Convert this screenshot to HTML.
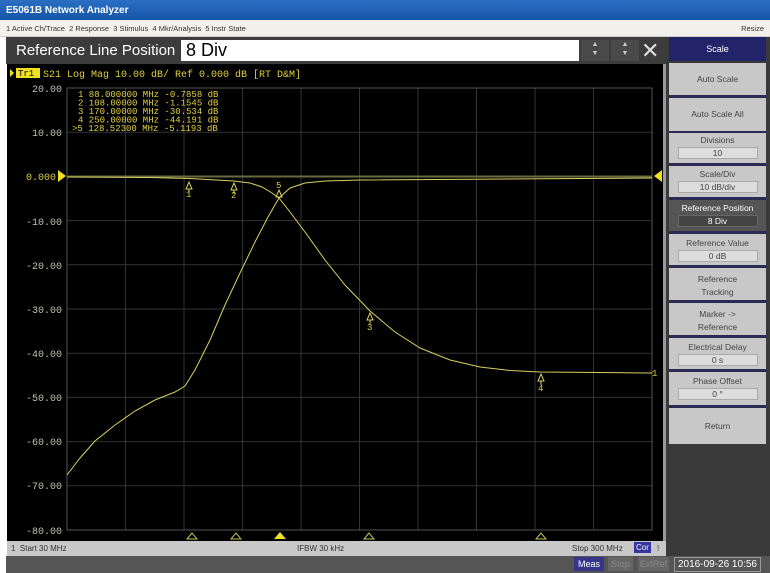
<!DOCTYPE html>
<html><head><meta charset="utf-8"><style>
*{margin:0;padding:0;box-sizing:border-box}
body{width:770px;height:573px;overflow:hidden;background:#fff;font-family:"Liberation Sans",sans-serif;position:relative}
.abs{position:absolute}
#title{left:0;top:0;width:770px;height:20px;background:linear-gradient(#2a6fc4,#1555a8);color:#fff;font-size:10px;font-weight:bold;padding:5px 0 0 6px}
#menu{left:0;top:20px;width:770px;height:17px;background:#f2f0ea;font-size:7.5px;color:#333;padding:4px 0 0 6px;border-bottom:1px solid #ccc}
#menu span.r{position:absolute;right:6px;top:4px}
#entry{left:6px;top:37px;width:660px;height:27px;background:#3c3c3c}
#entry .lbl{position:absolute;left:10px;top:5px;color:#fff;font-size:15px}
#entry .inp{position:absolute;left:175px;top:3px;width:398px;height:21px;background:#fff;font-size:18px;padding-left:5px;line-height:21px;color:#000}
.ab{position:absolute;top:3px;width:28px;height:21px;background:#4a4a4a;color:#ccc;font-size:7px;text-align:center;line-height:9px}
#panel{left:666px;top:37px;width:104px;height:519px;background:#3a3a3a}
.pb{position:absolute;left:3px;width:97px;background:#c8c8c8;border-bottom:3px solid #2a2a55;color:#444;font-size:8.5px;text-align:center}
.pb .v{margin:2px auto 0;width:80px;height:12px;background:#ddd;border:1px solid #aaa;line-height:10px}
#plot{left:7px;top:64px;width:656px;height:477px;background:#000}
#status{left:7px;top:541px;width:659px;height:15px;background:#c8c8c8;font-size:8px;color:#333}
#bottom{left:6px;top:556px;width:764px;height:17px;background:#555}
</style></head><body>
<div id="title" class="abs">E5061B Network Analyzer</div>
<div id="menu" class="abs">1 Active Ch/Trace &nbsp;2 Response &nbsp;3 Stimulus &nbsp;4 Mkr/Analysis &nbsp;5 Instr State<span class="r">Resize</span></div>
<div class="abs" style="left:0;top:37px;width:6px;height:536px;background:#fff"></div>
<div id="entry" class="abs"><div class="lbl">Reference Line Position</div><div class="inp">8 Div</div>
<div class="ab" style="left:575px">▲<br>▼</div><div class="ab" style="left:605px">▲<br>▼</div>
<div style="position:absolute;left:635px;top:0;color:#ddd;font-size:22px;line-height:27px">✕</div></div>
<div id="panel" class="abs">
<div style="position:absolute;left:3px;top:0;width:97px;height:24px;background:#23236a;color:#fff;font-size:9px;text-align:center;line-height:24px">Scale</div>
<div class="pb" style="top:26px;height:35px;line-height:32px">Auto Scale</div>
<div class="pb" style="top:61px;height:36px;line-height:33px">Auto Scale All</div>
<div class="pb" style="top:96px;height:33px;padding-top:2px">Divisions<div class="v">10</div></div>
<div class="pb" style="top:129px;height:34px;padding-top:3px">Scale/Div<div class="v">10 dB/div</div></div>
<div class="pb" style="top:163px;height:34px;padding-top:3px;background:#555;color:#fff">Reference Position<div class="v" style="background:#444;border-color:#666;color:#fff">8 Div</div></div>
<div class="pb" style="top:197px;height:34px;padding-top:4px">Reference Value<div class="v">0 dB</div></div>
<div class="pb" style="top:231px;height:35px;padding-top:5px;line-height:13px">Reference<br>Tracking</div>
<div class="pb" style="top:266px;height:35px;padding-top:5px;line-height:13px">Marker -&gt;<br>Reference</div>
<div class="pb" style="top:301px;height:34px;padding-top:4px">Electrical Delay<div class="v">0 s</div></div>
<div class="pb" style="top:335px;height:36px;padding-top:4px">Phase Offset<div class="v">0 °</div></div>
<div class="pb" style="top:371px;height:36px;line-height:36px;border-bottom:none">Return</div>
</div>
<div id="plot" class="abs">
<svg width="656" height="477" viewBox="7 64 656 477" style="display:block" font-family="Liberation Mono,monospace">
<g stroke="#333" stroke-width="1">
<path d="M125.5 88V530M184 88V530M242.5 88V530M301 88V530M359.5 88V530M418 88V530M476.5 88V530M535 88V530M593.5 88V530"/>
<path d="M67 132.2H652M67 220.6H652M67 264.8H652M67 309H652M67 353.2H652M67 397.4H652M67 441.6H652M67 485.8H652"/>
</g>
<rect x="67" y="88" width="585" height="442" fill="none" stroke="#555"/>
<rect x="67" y="175.5" width="585" height="2" fill="#6a6a40"/>
<g fill="#c0c0b0" font-size="10"><text x="62" y="92" text-anchor="end">20.00</text><text x="62" y="136" text-anchor="end">10.00</text><text x="56" y="180" text-anchor="end" fill="#e0d040">0.000</text>
<text x="62" y="225" text-anchor="end">-10.00</text><text x="62" y="269" text-anchor="end">-20.00</text><text x="62" y="313" text-anchor="end">-30.00</text><text x="62" y="357" text-anchor="end">-40.00</text><text x="62" y="401" text-anchor="end">-50.00</text><text x="62" y="445" text-anchor="end">-60.00</text><text x="62" y="489" text-anchor="end">-70.00</text><text x="62" y="534" text-anchor="end">-80.00</text></g>
<path d="M58 170L66 176L58 182Z" fill="#f0e020"/><path d="M662 170L654 176L662 182Z" fill="#f0e020"/>
<rect x="16" y="68" width="24" height="10" fill="#f0e020"/><path d="M10 69L14 73L10 77Z" fill="#f0e020"/>
<text x="18" y="76" font-size="9" fill="#000">Tr1</text>
<text x="43" y="77" font-size="10" fill="#e0d040" xml:space="preserve">S21 Log Mag 10.00 dB/ Ref 0.000 dB [RT D&amp;M]</text>
<g font-size="9" fill="#e0d040" xml:space="preserve"><text x="78" y="97"> 1   88.000000 MHz  -0.7858 dB</text><text x="78" y="105.5"> 2  108.00000 MHz  -1.1545 dB</text><text x="78" y="114"> 3  170.00000 MHz -30.534 dB</text><text x="78" y="122.5"> 4  250.00000 MHz -44.191 dB</text><text x="72" y="131">&gt;5  128.52300 MHz -5.1193 dB</text></g>
<g fill="none" stroke="#d8d060" stroke-width="1">
<path d="M67 177L150 177.5L190 178.5L234 181L250 183L262 187L272 193L279 198L290 212L305 232L325 260L345 285L370 311L395 332L420 348L450 360L480 367L510 370.5L540 372L600 372.5L652 373"/>
<path d="M67 475L80 458L95 441L115 425L135 411L155 400L175 392L185 386L195 370L210 340L225 305L240 273L255 242L268 217L279 198L290 188L305 183L325 181L360 180L652 178"/>
</g>
<g stroke="#d8d060" fill="none" font-size="9" >
<path d="M189 182L186 189H192ZM189 189V193"/><path d="M234 183L231 190H237ZM234 190V194"/><path d="M279 190L276 197H282Z"/><path d="M370 313L367 320H373ZM370 320V324"/><path d="M541 374L538 381H544ZM541 381V385"/>
</g>
<g fill="#e0d040" font-size="9"><text x="186" y="197">1</text><text x="231" y="198">2</text><text x="276" y="188">5</text><text x="367" y="330">3</text><text x="538" y="391">4</text><text x="652" y="376">1</text></g>
<g stroke="#c8c050" fill="none"><path d="M192 533L187 539H197Z"/><path d="M236 533L231 539H241Z"/><path d="M369 533L364 539H374Z"/><path d="M541 533L536 539H546Z"/></g>
<path d="M280 532L274 539H286Z" fill="#f0e020"/>
</svg></div>
<div id="status" class="abs"><span style="position:absolute;left:4px;top:3px">1 &nbsp;Start 30 MHz</span><span style="position:absolute;left:290px;top:3px">IFBW 30 kHz</span><span style="position:absolute;left:565px;top:3px">Stop 300 MHz</span><span style="position:absolute;left:627px;top:1px;background:#3535a0;color:#fff;padding:1px 2px">Cor</span><span style="position:absolute;left:650px;top:3px">!</span></div>
<div class="abs" style="left:663px;top:64px;width:3px;height:477px;background:#999"></div>
<div id="bottom" class="abs"><span style="position:absolute;left:568px;top:1px;background:#35358a;color:#fff;font-size:9px;padding:2px 4px">Meas</span><span style="position:absolute;left:602px;top:1px;color:#888;font-size:9px;padding:2px 3px;background:#666">Stop</span><span style="position:absolute;left:632px;top:1px;color:#888;font-size:9px;padding:2px 2px;background:#666">ExtRef</span><span style="position:absolute;left:668px;top:1px;color:#fff;font-size:10px;padding:1px 3px;border:1px solid #999">2016-09-26 10:56</span></div>
</body></html>
